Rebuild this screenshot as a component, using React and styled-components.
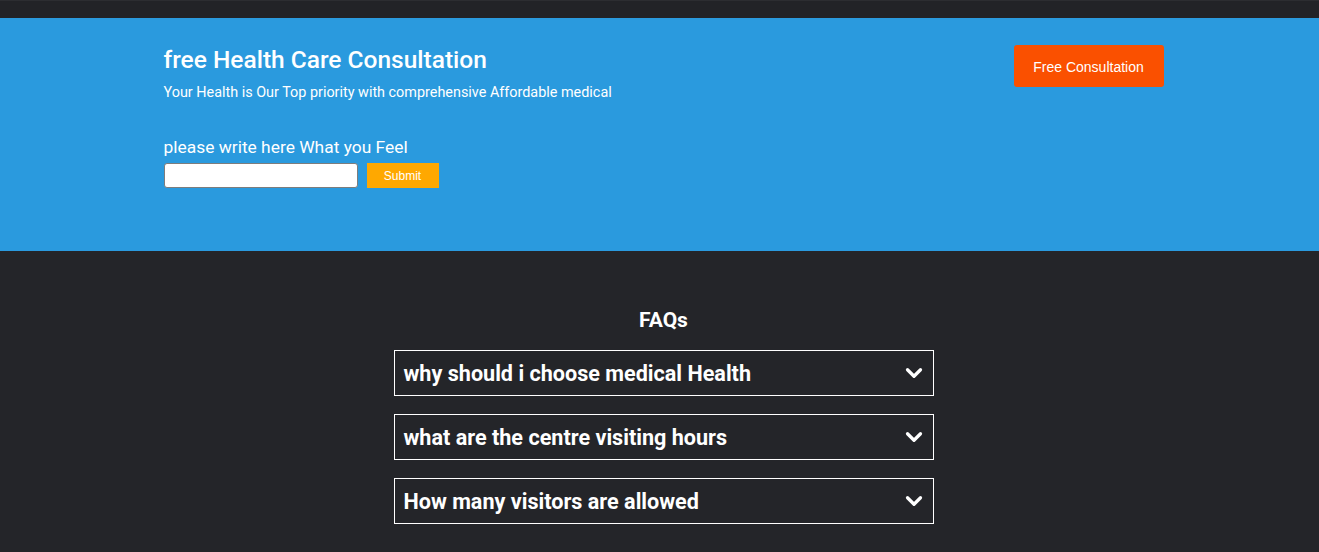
import React from 'react'
import styled, { createGlobalStyle } from 'styled-components'
import { ChevronDown } from 'lucide-react'

const GlobalStyle = createGlobalStyle`
    body {
        margin: 0;
        background: #242529;
        font-family: Roboto, "Liberation Sans", Arial, sans-serif;
    }
`

const faqs = [
    'why should i choose medical Health',
    'what are the centre visiting hours',
    'How many visitors are allowed',
]

function App() {
    return (
        <Page>
            <GlobalStyle />
            <TopBar />
            <Consult>
                <ConsultInner>
                    <ConsultText>
                        <h2>free Health Care Consultation</h2>
                        <p>Your Health is Our Top priority with comprehensive Affordable medical</p>
                        <Label>please write here What you Feel</Label>
                        <Form>
                            <Field type="text" />
                            <SubmitBtn>Submit</SubmitBtn>
                        </Form>
                    </ConsultText>
                    <ConsultBtn>Free Consultation</ConsultBtn>
                </ConsultInner>
            </Consult>
            <Faq>
                <FaqTitle>FAQs</FaqTitle>
                {faqs.map((q) => (
                    <FaqItem key={q}>
                        <span>{q}</span>
                        <ChevronDown size={26} strokeWidth={3} color="#fff" />
                    </FaqItem>
                ))}
            </Faq>
        </Page>
    )
}

export default App

const Page = styled.div`
    min-height: 100vh;
    background: #242529;
`

const TopBar = styled.div`
    height: 18px;
    background: #222327;
    border-top: 1px solid #2c2d31;
    box-sizing: border-box;
`

const Consult = styled.section`
    background: #2a9ade;
    height: 233px;
    padding: 27px 0 0 8px;
    box-sizing: border-box;
`

const ConsultInner = styled.div`
    width: 1000px;
    margin: 0 auto;
    display: flex;
    justify-content: space-between;
    align-items: flex-start;
`

const ConsultText = styled.div`
    color: #fff;
    h2 {
        margin: 0;
        font-size: 24.5px;
        font-weight: 500;
        line-height: 30px;
    }
    p {
        margin: 9px 0 0;
        font-size: 14.4px;
        line-height: 18px;
    }
`

const Label = styled.div`
    margin-top: 34px;
    font-size: 17.4px;
    line-height: 22px;
`

const Form = styled.div`
    display: flex;
    gap: 9px;
    margin-top: 5px;
`

const Field = styled.input`
    width: 194px;
    height: 25px;
    box-sizing: border-box;
    border: 1px solid #7d7d7d;
    border-radius: 3px;
    background: #fff;
    margin: 0;
`

const SubmitBtn = styled.button`
    width: 72px;
    height: 25px;
    border: none;
    background: #ffa800;
    color: #fff;
    font-family: "Liberation Sans", Arial, sans-serif;
    font-size: 12px;
    padding: 1px 0 0;
`

const ConsultBtn = styled.button`
    width: 150px;
    height: 42px;
    border: none;
    border-radius: 3px;
    background: #fa5000;
    color: #fff;
    font-family: "Liberation Sans", Arial, sans-serif;
    font-size: 14px;
    padding: 2px 0 0;
`

const Faq = styled.section`
    padding: 55px 0 20px 8px;
    display: flex;
    flex-direction: column;
    align-items: center;
    gap: 18px;
`

const FaqTitle = styled.h3`
    margin: 0 0 -2px;
    color: #fff;
    font-size: 21px;
    font-weight: 700;
    line-height: 28px;
`

const FaqItem = styled.div`
    width: 540px;
    height: 46px;
    box-sizing: border-box;
    border: 1px solid #fff;
    display: flex;
    align-items: center;
    justify-content: space-between;
    padding: 0 6px 0 9px;
    color: #fff;
    font-size: 21.6px;
    font-weight: 700;
`
